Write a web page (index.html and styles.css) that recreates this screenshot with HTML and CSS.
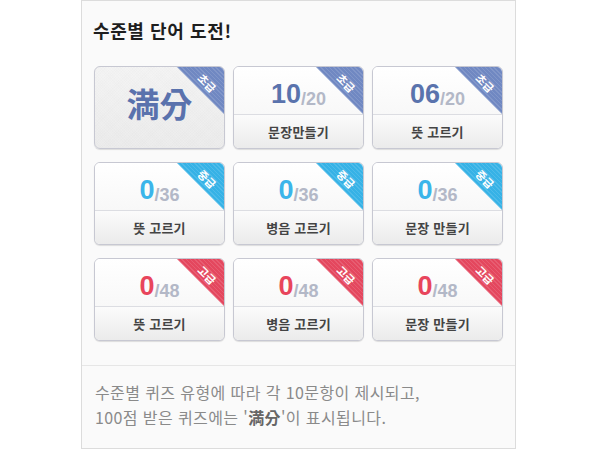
FILE: index.html
```html
<!DOCTYPE html>
<html lang="ko">
<head>
<meta charset="utf-8">
<link rel="stylesheet" href="styles.css">
</head>
<body>
<div class="panel">
  <h2 class="title">수준별 단어 도전!</h2>
  <div class="grid">
    <div class="card card-full lv-beg">
      <div class="full">満分</div>
      <div class="ribbon"><span>초급</span></div>
    </div>
    <div class="card lv-beg">
      <div class="score"><b>10</b><i>/20</i></div>
      <div class="label">문장만들기</div>
      <div class="ribbon"><span>초급</span></div>
    </div>
    <div class="card lv-beg">
      <div class="score"><b>06</b><i>/20</i></div>
      <div class="label">뜻 고르기</div>
      <div class="ribbon"><span>초급</span></div>
    </div>
    <div class="card lv-mid">
      <div class="score"><b>0</b><i>/36</i></div>
      <div class="label">뜻 고르기</div>
      <div class="ribbon"><span>중급</span></div>
    </div>
    <div class="card lv-mid">
      <div class="score"><b>0</b><i>/36</i></div>
      <div class="label">병음 고르기</div>
      <div class="ribbon"><span>중급</span></div>
    </div>
    <div class="card lv-mid">
      <div class="score"><b>0</b><i>/36</i></div>
      <div class="label">문장 만들기</div>
      <div class="ribbon"><span>중급</span></div>
    </div>
    <div class="card lv-adv">
      <div class="score"><b>0</b><i>/48</i></div>
      <div class="label">뜻 고르기</div>
      <div class="ribbon"><span>고급</span></div>
    </div>
    <div class="card lv-adv">
      <div class="score"><b>0</b><i>/48</i></div>
      <div class="label">병음 고르기</div>
      <div class="ribbon"><span>고급</span></div>
    </div>
    <div class="card lv-adv">
      <div class="score"><b>0</b><i>/48</i></div>
      <div class="label">문장 만들기</div>
      <div class="ribbon"><span>고급</span></div>
    </div>
  </div>
  <div class="foot">
    <p>수준별 퀴즈 유형에 따라 각 10문항이 제시되고,<br>100점 받은 퀴즈에는 '<strong>満分</strong>'이 표시됩니다.</p>
  </div>
</div>
</body>
</html>
```
FILE: styles.css
```css
html, body {
  margin: 0;
  padding: 0;
  background: #fff;
}
body {
  font-family: "Noto Sans CJK KR", "Noto Sans", sans-serif;
}
.panel {
  box-sizing: border-box;
  margin-left: 81px;
  width: 435px;
  height: 449px;
  border: 1px solid #dcdcdc;
  background: #fafafa;
}
.title {
  margin: 0;
  padding: 17px 0 0 11px;
  height: 48px;
  box-sizing: border-box;
  font-size: 18px;
  line-height: 24px;
  font-weight: 700;
  letter-spacing: 0.6px;
  color: #1e1e1e;
}
.grid {
  display: grid;
  grid-template-columns: repeat(3, 131px);
  grid-auto-rows: 83px;
  column-gap: 8px;
  row-gap: 13px;
  padding: 17px 12px 24px 12px;
  border-bottom: 1px solid #e6e6e6;
}
.card {
  position: relative;
  box-sizing: border-box;
  border: 1px solid #c7c8d2;
  border-radius: 6px;
  overflow: hidden;
  background: #fff;
  box-shadow: 0 1px 1px rgba(0, 0, 0, 0.12);
  display: flex;
  flex-direction: column;
}
.score {
  height: 48px;
  border-bottom: 1px solid #dcdde2;
  background: linear-gradient(#ffffff, #f8f8f8);
  display: flex;
  align-items: flex-end;
  justify-content: center;
  box-sizing: border-box;
  font-family: "Liberation Sans", Arial, sans-serif;
  line-height: 1;
}
.score b {
  font-size: 27px;
  font-weight: 700;
  padding-bottom: 6px;
}
.score i {
  font-style: normal;
  font-weight: 700;
  font-size: 18px;
  color: #b3b8c7;
  padding-bottom: 6px;
}
.label {
  flex: 1;
  display: flex;
  align-items: center;
  justify-content: center;
  font-size: 13px;
  font-weight: 700;
  letter-spacing: 0.2px;
  color: #444;
  background: linear-gradient(#fbfbfb, #ebebeb);
}
.card-full {
  background:
    repeating-linear-gradient(45deg, rgba(0,0,0,0.008) 0 1px, transparent 1px 2px),
    repeating-linear-gradient(-45deg, rgba(0,0,0,0.008) 0 1px, transparent 1px 2px),
    linear-gradient(#f4f4f4, #ececec);
  align-items: center;
  justify-content: center;
}
.full {
  font-size: 33px;
  font-weight: 700;
  color: #5a72ad;
  line-height: 1;
  margin-top: -8px;
}
.ribbon {
  position: absolute;
  top: 0;
  right: 0;
  width: 47px;
  height: 47px;
  clip-path: polygon(0 0, 100% 0, 100% 100%);
}
.ribbon span {
  position: absolute;
  left: 30px;
  top: 16px;
  transform: translate(-50%, -50%) rotate(45deg);
  font-size: 11px;
  font-weight: 700;
  color: #fff;
  line-height: 1;
  white-space: nowrap;
}
.lv-beg .ribbon {
  background:
    repeating-linear-gradient(45deg, rgba(255,255,255,0.12) 0 1px, transparent 1px 3px),
    #7088c2;
}
.lv-mid .ribbon {
  background:
    repeating-linear-gradient(45deg, rgba(255,255,255,0.12) 0 1px, transparent 1px 3px),
    #36b2e6;
}
.lv-adv .ribbon {
  background:
    repeating-linear-gradient(45deg, rgba(255,255,255,0.12) 0 1px, transparent 1px 3px),
    #e4475e;
}
.lv-beg .score b { color: #5a73ad; }
.lv-mid .score b { color: #3bb5ea; }
.lv-adv .score b { color: #e8455c; }
.foot p {
  margin: 0;
  padding: 14px 0 0 13px;
  font-size: 16px;
  line-height: 25px;
  letter-spacing: 0.4px;
  color: #8a8a8a;
}
.foot strong {
  color: #666;
  font-weight: 700;
}
```
